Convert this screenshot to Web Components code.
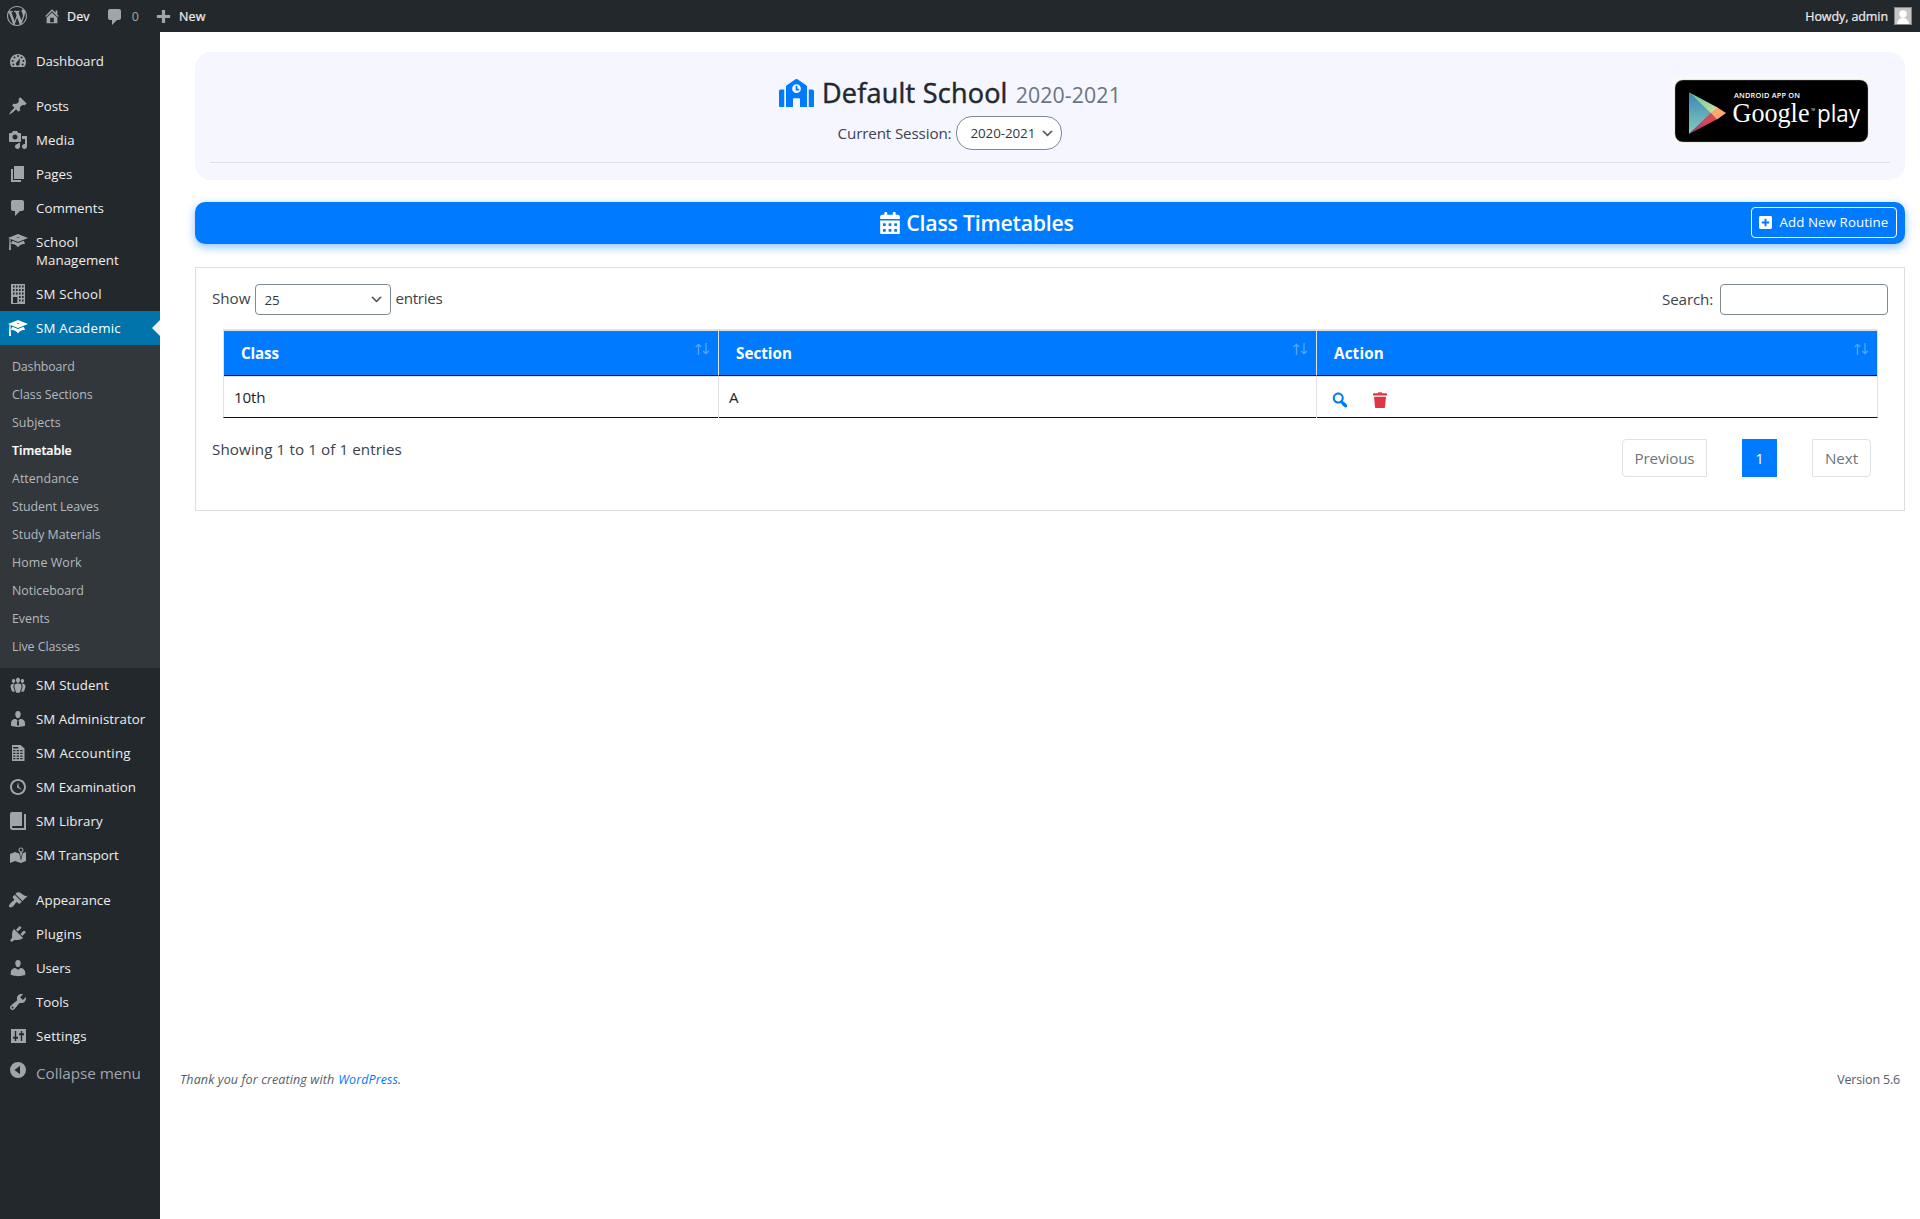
<!DOCTYPE html>
<html lang="en">
<head>
<meta charset="utf-8">
<title>Class Timetables</title>
<style>
html,body{margin:0;height:100%;background:#fff}
body{font-family:"Open Sans","Noto Sans",sans-serif;color:#3c434a;overflow:hidden}
</style>
</head>
<body>
<admin-page></admin-page>
<script>
const ICONS = {
wp:'<path d="M20 10c0-5.51-4.49-10-10-10C4.48 0 0 4.49 0 10c0 5.52 4.48 10 10 10 5.51 0 10-4.48 10-10zM7.78 15.37L4.37 6.22c.55-.02 1.17-.08 1.17-.08.5-.06.44-1.13-.06-1.11 0 0-1.45.11-2.37.11-.18 0-.37 0-.58-.01C4.12 2.69 6.87 1.11 10 1.11c2.33 0 4.45.87 6.05 2.34-.68-.11-1.65.39-1.65 1.58 0 .74.45 1.36.9 2.1.35.61.55 1.36.55 2.46 0 1.49-1.4 5-1.4 5l-3.03-8.37c.54-.02.82-.17.82-.17.5-.05.44-1.25-.06-1.22 0 0-1.44.12-2.38.12-.87 0-2.33-.12-2.33-.12-.5-.03-.56 1.2-.06 1.22l.92.08 1.26 3.41zM17.41 10c.24-.64.74-1.87.43-4.25.7 1.29 1.05 2.71 1.05 4.25 0 3.29-1.73 6.24-4.4 7.78.97-2.59 1.94-5.2 2.92-7.78zM6.1 18.09C3.12 16.65 1.11 13.53 1.11 10c0-1.3.23-2.48.72-3.59C3.25 10.3 4.67 14.2 6.1 18.09zm4.03-6.63l2.58 6.98c-.86.29-1.76.45-2.71.45-.79 0-1.57-.11-2.29-.33.81-2.38 1.62-4.74 2.42-7.1z"/>',
home:'<path fill-rule="evenodd" d="M16 8.5l1.53 1.53-1.06 1.06L10 4.6l-6.47 6.47-1.06-1.06L10 2.47l4 4V4h2v4.5zm-6-2.46l6 5.99V18H4v-5.97zM12 17v-5H8v5h4z"/>',
comment:'<path d="M5 2h9c1.1 0 2 .9 2 2v7c0 1.1-.9 2-2 2h-2l-5 5v-5H5c-1.1 0-2-.9-2-2V4c0-1.1.9-2 2-2z"/>',
plus:'<path d="M17 8.5v3h-5.300v5.300H8.300V11.500H3v-3h5.300V3.200h3.400V8.500z"/>',
dashboard:'<path fill-rule="evenodd" d="M3.760 16h12.480c1.100-1.370 1.760-3.110 1.760-5 0-4.420-3.580-8-8-8s-8 3.580-8 8c0 1.890.66 3.630 1.760 5zM9 5a1 1 0 0 1 2 0 1 1 0 0 1-2 0zM5.500 6.500a1 1 0 0 1 2 0 1 1 0 0 1-2 0zM12.500 6.500a1 1 0 0 1 2 0 1 1 0 0 1-2 0zM3.600 10a1 1 0 0 1 2 0 1 1 0 0 1-2 0zM14.400 10a1 1 0 0 1 2 0 1 1 0 0 1-2 0zM4.300 13.500a1 1 0 0 1 2 0 1 1 0 0 1-2 0zM13.700 13.500a1 1 0 0 1 2 0 1 1 0 0 1-2 0zM8.700 11.200L12 7.200 11.600 12.300a1.900 1.900 0 1 1-2.900-1.100z"/>',
post:'<path d="M10.440 3.020l1.820-1.820 6.360 6.350-1.830 1.820c-1.050-.68-2.480-.57-3.410.36l-.75.75c-.92.93-1.040 2.350-.35 3.410l-1.830 1.820-2.410-2.410-2.800 2.790c-.42.42-3.380 2.710-3.800 2.290s1.860-3.390 2.280-3.810l2.790-2.790L4.100 9.360l1.830-1.820c1.050.69 2.480.57 3.400-.36l.75-.75c.93-.92 1.050-2.350.36-3.410z"/>',
media:'<path fill-rule="evenodd" d="M13 11V4c0-.55-.45-1-1-1h-1.670L9 1H5L3.670 3H2c-.55 0-1 .45-1 1v7c0 .55.45 1 1 1h10c.55 0 1-.45 1-1zM7 4.500c1.380 0 2.500 1.120 2.500 2.500S8.380 9.500 7 9.500 4.500 8.380 4.500 7 5.620 4.500 7 4.500zM14 6h5v10.500c0 1.380-1.120 2.500-2.500 2.500S14 17.880 14 16.500s1.120-2.500 2.500-2.500c.17 0 .34.02.5.05V9h-3V6zm-4 8.050V13h2v3.500c0 1.380-1.120 2.500-2.500 2.500S7 17.880 7 16.500 8.120 14 9.500 14c.17 0 .34.02.5.05z"/>',
page:'<path d="M6 15V2h10v13H6zm-1 1h8v2H3V5h2v11z"/>',
learn:'<path fill-rule="evenodd" d="M10 10L2.540 7.020 3 18H1l.48-11.410L0 6l10-4 10 4zm0-5c-.55 0-1 .22-1 .5s.45.5 1 .5 1-.22 1-.5-.45-.5-1-.5zm0 6l5.570-2.230c.71.94 1.200 2.070 1.360 3.300-.3-.04-.61-.07-.93-.07-2.550 0-4.780 1.370-6 3.410C8.780 13.370 6.550 12 4 12c-.32 0-.63.03-.93.07.16-1.230.65-2.360 1.360-3.300z"/>',
building:'<path fill-rule="evenodd" d="M3 0h14v20H3zM5 1.500v2h1.600v-2zM8 1.500v2h1.600v-2zM11 1.500v2h1.600v-2zM14 1.500v2h1.600v-2zM5 5v2h1.600V5zM8 5v2h1.600V5zM11 5v2h1.600V5zM14 5v2h1.600V5zM5 8.500v2h1.600v-2zM8 8.500v2h1.600v-2zM11 8.500v2h1.600v-2zM14 8.500v2h1.600v-2zM11 12v2h1.600v-2zM14 12v2h1.600v-2zM11 15.500v2h1.600v-2zM14 15.500v2h1.600v-2zM5 13v6h4.300v-6z"/>',
groups:'<path d="M8.030 4.460c-.29 1.280.55 3.460 1.970 3.460 1.410 0 2.250-2.180 1.960-3.460-.22-.98-1.080-1.630-1.960-1.630-.89 0-1.740.65-1.970 1.630zm-4.130.9c-.25 1.080.47 2.930 1.670 2.930s1.920-1.850 1.670-2.930c-.19-.83-.92-1.390-1.670-1.390s-1.480.56-1.670 1.390zm8.860 0c-.25 1.080.47 2.930 1.660 2.930 1.200 0 1.920-1.850 1.670-2.930-.19-.83-.92-1.390-1.670-1.390-.74 0-1.470.56-1.660 1.390zm-.59 11.430l1.250-4.300C14.200 10 12.710 8.470 10 8.470c-2.720 0-4.210 1.530-3.440 4.020l1.260 4.300C8.050 17.510 9 18 10 18c.98 0 1.940-.49 2.170-1.210zm-6.100-7.630c-.49.67-.96 1.830-.42 3.590l1.120 3.790c-.34.2-.77.31-1.200.31-.85 0-1.650-.41-1.850-1.030l-1.070-3.650c-.65-2.110.61-3.400 2.920-3.400.27 0 .54.02.79.06-.1.1-.2.22-.29.33zm8.350-.39c2.310 0 3.580 1.290 2.920 3.400l-1.070 3.650c-.2.62-1 1.030-1.850 1.030-.43 0-.86-.11-1.200-.31l1.110-3.770c.55-1.780.08-2.940-.42-3.610-.08-.11-.18-.23-.28-.33.25-.04.51-.06.79-.06z"/>',
businessman:'<path d="M10 9.250c-2.270 0-2.730-3.440-2.730-3.440C7 4.020 7.820 2 9.970 2c2.160 0 2.980 2.020 2.710 3.810 0 0-.41 3.440-2.680 3.440z"/><path d="M16.500 12.240c.41.7.5 1.410.5 2.140v2.490c-2 .8-4.500 1.130-7 1.130s-5-.4-7-1.130v-2.490c0-.75.07-1.460.46-2.150s.81-1.250 1.500-1.680C5.660 10.120 7.190 10 8 10l1.670 1.670L9 13v3l1.020 1.080L11 16v-3l-.68-1.330L11.970 10c.77 0 2.200.07 2.900.52.71.45 1.210 1.020 1.630 1.720z"/>',
sheet:'<path fill-rule="evenodd" d="M4 2h8.500L16.500 5.500V18H4zM5.200 4v1.600h5V4zM5.200 7v1.300h2.200V7zM8.600 7v1.300h2.400V7zM12.200 7v1.300h2.400V7zM5.200 9.700V11h2.200V9.700zM8.600 9.700V11h2.400V9.700zM12.200 9.700V11h2.400V9.700zM5.200 12.400v1.300h2.200v-1.300zM8.600 12.400v1.300h2.400v-1.300zM12.200 12.400v1.300h2.400v-1.300zM5.200 15v1.300h2.200V15zM8.600 15v1.300h2.400V15zM12.200 15v1.300h2.400V15z"/>',
clock:'<path fill-rule="evenodd" d="M10 2c4.420 0 8 3.580 8 8s-3.580 8-8 8-8-3.580-8-8 3.580-8 8-8zm0 14c3.310 0 6-2.690 6-6s-2.690-6-6-6-6 2.690-6 6 2.690 6 6 6z"/><path d="M9.290 10.710c.07.05.14.1.23.15L14 13l-3.030-3.190L10 5l-.97 4.810c-.1.3 0 .7.26.9z"/>',
book:'<path d="M16 3h2v16H4.500C3 19 2 17.800 2 16.500V3c0-1.200.8-2 2-2h10v14H4.800c-1 0-1 2 0 2H16z"/>',
location:'<path fill-rule="evenodd" d="M13 13.140l1.170-5.940c.79-.43 1.330-1.250 1.330-2.200 0-1.380-1.120-2.500-2.500-2.500S10.500 3.620 10.500 5c0 .95.54 1.770 1.330 2.200zm0-9.640c.83 0 1.500.67 1.500 1.500s-.67 1.500-1.500 1.500-1.500-.67-1.500-1.500.67-1.500 1.500-1.500zm1.720 4.800L18 6.970v9L13.120 18 7 15.970l-5 2v-9l5-2 4.270 1.410 1.730 7.300z"/>',
appearance:'<path d="M14.480 11.060L7.410 3.990l1.500-1.500c.5-.56 2.300-.47 3.510.32 1.210.8 1.430 1.280 2.910 2.100 1.180.64 2.450 1.260 4.450.85zm-.71.71L6.700 4.700 4.930 6.470c-.39.39-.39 1.020 0 1.410l1.060 1.060c.39.39.39 1.030 0 1.420-.6.6-1.430 1.110-2.210 1.690-.35.26-.7.53-1.010.84C1.430 14.230.4 16.080 1.400 17.070c.99 1 2.840-.03 4.180-1.360.31-.31.58-.66.85-1.020.57-.78 1.080-1.610 1.690-2.210.39-.39 1.020-.39 1.410 0l1.060 1.060c.39.39 1.020.39 1.410 0z"/>',
plugins:'<path d="M13.110 4.360L9.870 7.600 8 5.730l3.240-3.240c.35-.34 1.050-.2 1.560.32.52.51.66 1.210.31 1.550zm-8 1.770l.91-1.120 9.010 9.010-1.190.84c-.71.71-2.630 1.160-3.820 1.160H6.140L4.900 17.260c-.59.59-1.540.59-2.120 0-.59-.58-.59-1.530 0-2.120l1.240-1.240v-3.880c0-1.130.4-3.190 1.090-3.890zm7.260 3.970l3.240-3.240c.34-.35 1.040-.21 1.550.31.52.51.66 1.210.31 1.550l-3.240 3.250z"/>',
users:'<path d="M10 9.250c-2.270 0-2.730-3.440-2.730-3.440C7 4.020 7.820 2 9.970 2c2.160 0 2.980 2.020 2.710 3.810 0 0-.41 3.440-2.680 3.440zm0 2.570L12.720 10c2.390 0 4.520 2.330 4.520 4.530v2.490s-3.650 1.130-7.240 1.130c-3.650 0-7.240-1.130-7.240-1.130v-2.490c0-2.250 1.940-4.480 4.470-4.480z"/>',
tools:'<path fill-rule="evenodd" d="M16.680 9.770c-1.340 1.340-3.300 1.670-4.950.99l-5.410 6.520c-.99.99-2.590.99-3.580 0s-.99-2.590 0-3.570l6.520-5.420c-.68-1.650-.35-3.610.99-4.950 1.280-1.280 3.120-1.620 4.720-1.060l-2.890 2.890 2.820 2.820 2.860-2.870c.53 1.580.18 3.390-1.080 4.650zM3.810 16.210c.4.39 1.040.39 1.430 0 .4-.4.4-1.040 0-1.430-.39-.4-1.030-.4-1.430 0-.39.39-.39 1.030 0 1.430z"/>',
settings:'<path fill-rule="evenodd" d="M3 3h15v14H3zM6.800 5v5.700H5v2h1.800v2.300h1.400v-2.300H10v-2H8.200V5zM12.800 5v2.200H11v2h1.800V15h1.400V9.200H16v-2h-1.800V5z"/>',
collapse:'<path fill-rule="evenodd" d="M10 2a8 8 0 1 1 0 16 8 8 0 0 1 0-16zM12 5.800L6.500 10l5.500 4.200z"/>',
search:'<path fill-rule="evenodd" d="M12.140 4.180c1.870 1.870 2.110 4.750.72 6.890.12.1.22.21.36.31.2.16.47.36.81.59.34.24.56.39.66.47.42.31.73.57.94.78.32.32.6.65.84 1 .25.35.44.69.59 1.040.14.35.21.68.18 1-.02.32-.14.59-.36.81s-.49.34-.81.36c-.31.02-.65-.04-.99-.19-.35-.14-.7-.34-1.040-.59-.35-.24-.68-.52-1-.84-.21-.21-.47-.52-.77-.93-.1-.13-.25-.35-.47-.66-.22-.32-.4-.57-.56-.78-.16-.2-.29-.35-.44-.5-2.070 1.090-4.690.76-6.440-.98-2.140-2.150-2.140-5.640 0-7.780 2.150-2.150 5.630-2.150 7.780 0zm-1.410 6.360c1.360-1.370 1.360-3.580 0-4.950-1.370-1.370-3.590-1.370-4.950 0-1.370 1.370-1.370 3.580 0 4.950 1.360 1.370 3.580 1.370 4.950 0z"/>',
trash:'<path fill-rule="evenodd" d="M8 3.200C8 2.400 9 2 10 2s2 .4 2 1.200h4c.6 0 1 .4 1 .9V5.500H3V4.100c0-.5.4-.9 1-.9zm1 0h2c0-.5-2-.5-2 0zM4 6.700h12l-1 10.300c0 .6-.5 1-1 1H6c-.5 0-1-.4-1-1z"/>',
chevron:'<path d="M5 6l5 5 5-5 2 1-7 7-7-7 2-1z"/>',
plussq:'<path fill-rule="evenodd" d="M2.200 0h15.600Q20 0 20 2.200v15.600q0 2.200-2.200 2.200H2.200Q0 20 0 17.800V2.200Q0 0 2.200 0zM8.500 4.300v4.200H4.300v3h4.200v4.200h3v-4.200h4.200v-3h-4.200V4.300z"/>'
};
ICONS.school='<path fill-rule="evenodd" d="M0 224v272c0 8.840 7.160 16 16 16h80V192H32c-17.670 0-32 14.330-32 32zm360-48h-24v-40c0-4.420-3.580-8-8-8h-16c-4.420 0-8 3.580-8 8v64c0 4.420 3.580 8 8 8h48c4.420 0 8-3.580 8-8v-16c0-4.420-3.580-8-8-8zm137.750-63.960l-160-106.670a32.020 32.020 0 0 0-35.500 0l-160 106.670A32.002 32.002 0 0 0 128 138.660V512h128V368c0-8.840 7.160-16 16-16h96c8.840 0 16 7.160 16 16v144h128V138.670c0-10.700-5.350-20.700-14.250-26.630zM320 256c-44.180 0-80-35.820-80-80s35.820-80 80-80 80 35.820 80 80-35.820 80-80 80zm288-64h-64v320h80c8.840 0 16-7.160 16-16V224c0-17.670-14.330-32-32-32z"/>';
ICONS.calendar=`<path fill-rule="evenodd" d="M400 64h-48V16c0-8.800-7.200-16-16-16h-32c-8.800 0-16 7.200-16 16v48H160V16c0-8.800-7.200-16-16-16h-32c-8.800 0-16 7.200-16 16v48H48C21.500 64 0 85.500 0 112v48h448v-48c0-26.500-21.500-48-48-48zM0 192v272c0 26.500 21.500 48 48 48h352c26.500 0 48-21.500 48-48V192z${[64,192,320].map(x=>[256,384].map(y=>`M${x+12} ${y}h40q12 0 12 12v40q0 12-12 12h-40q-12 0-12-12v-40q0-12 12-12z`).join('')).join('')}"/>`;
const BOX = {school:'0 0 640 512', calendar:'0 0 448 512'};

class UiIcon extends HTMLElement{
  connectedCallback(){
    const n=this.getAttribute('name'), w=this.getAttribute('w')||20, h=this.getAttribute('h')||w;
    const r=this.attachShadow({mode:'open'});
    r.innerHTML=`<style>:host{display:inline-flex;flex:none}svg{display:block;fill:currentColor}</style><svg width="${w}" height="${h}" viewBox="${BOX[n]||'0 0 20 20'}">${ICONS[n]}</svg>`;
  }
}
/* A label whose tracking is adjusted so that its text spans the width given in "w". */
class FitText extends HTMLElement{
  connectedCallback(){
    const r=this.attachShadow({mode:'open'});
    r.innerHTML='<style>:host{display:inline-block;white-space:nowrap;flex:none}</style><slot></slot>';
    const w=parseFloat(this.getAttribute('w')), n=this.textContent.length;
    if(w&&n>1){
      const nat=this.getBoundingClientRect().width;
      const fs=parseFloat(getComputedStyle(this).fontSize);
      this.style.letterSpacing=((w+fs*.06-nat)/n).toFixed(3)+'px';
    }
  }
}
class AdminBar extends HTMLElement{
  connectedCallback(){
    this.attachShadow({mode:'open'}).innerHTML=`<style>
:host{display:flex;justify-content:space-between;align-items:center;height:32px;background:#23282d;color:#eee;font-size:12.500px;line-height:31px;padding:0 8px 0 7px;box-sizing:border-box}
div{display:flex;align-items:center}
ui-icon{color:#a0a5aa}
.a{margin-left:16px}.b{margin-left:6px}
.n{color:#a0a5aa;margin-left:7px;padding-top:1px}
.av{width:16px;height:16px;border:1px solid #82878c;background:#c6c6c6;margin-left:6px}
svg{display:block}
fit-text{-webkit-text-stroke:.2px currentColor;padding-top:1px}
</style>
<div><ui-icon name="wp" w="20"></ui-icon><ui-icon class="a" name="home" w="18"></ui-icon><fit-text class="b" w="22">Dev</fit-text>
<ui-icon name="comment" w="20" style="margin:2px 0 0 15px"></ui-icon><span class="n">0</span><ui-icon name="plus" w="19" style="margin-left:15px"></ui-icon><fit-text style="margin-left:6px" w="26">New</fit-text></div>
<div><fit-text w="82">Howdy, admin</fit-text><span class="av"><svg width="16" height="16" viewBox="0 0 16 16" fill="#fff"><circle cx="8" cy="6" r="3.700"/><path d="M2 16c.3-3.500 2.300-5.300 4.500-6h3c2.200.7 4.200 2.500 4.500 6z"/></svg></span></div>`;
  }
}
class MenuItem extends HTMLElement{
  connectedCallback(){
    const on=this.hasAttribute('current');
    this.attachShadow({mode:'open'}).innerHTML=`<style>
:host{display:flex;position:relative;min-height:34px;box-sizing:border-box;padding:8px 0 8px 8px;gap:8px;font-size:13.300px;line-height:18px;color:#eee;${on?'background:#0073aa;color:#fff;':''}}
ui-icon{color:${on?'#fff':'#a0a5aa'};height:18px;align-items:center}
.t{display:flex;flex-direction:column;align-items:flex-start}
i{display:${on?'block':'none'};position:absolute;right:0;top:9px;border:8px solid transparent;border-left:0;border-right-color:#f1f1f1}
</style><ui-icon name="${this.getAttribute('icon')}" w="20"></ui-icon><div class="t"><slot></slot></div><i></i>`;
  }
}
class SubMenu extends HTMLElement{
  connectedCallback(){
    this.attachShadow({mode:'open'}).innerHTML=`<style>
:host{display:flex;flex-direction:column;align-items:flex-start;background:#32373c;padding:8px 0 7px 12px;font-size:12.400px;line-height:28px;color:#b4b9be}
</style><slot></slot>`;
  }
}
class SideMenu extends HTMLElement{
  connectedCallback(){
    const it=([i,...l])=>`<menu-item icon="${i}">${l.map(([t,w])=>`<fit-text w="${w}">${t}</fit-text>`).join('')}</menu-item>`;
    const A=[['post',['Posts',32]],['media',['Media',38]],['page',['Pages',35.5]],['comment',['Comments',67]],['learn',['School',41.5],['Management',82]],['building',['SM School',65]]];
    const B=[['groups',['SM Student',72]],['businessman',['SM Administrator',108.5]],['sheet',['SM Accounting',94]],['clock',['SM Examination',99]],['book',['SM Library',66]],['location',['SM Transport',82]]];
    const C=[['appearance',['Appearance',74]],['plugins',['Plugins',45]],['users',['Users',34]],['tools',['Tools',32]],['settings',['Settings',50]]];
    const S=[['Dashboard',62],['Class Sections',80],['Subjects',48],['Timetable',59],['Attendance',66],['Student Leaves',86],['Study Materials',88],['Home Work',69],['Noticeboard',71],['Events',37],['Live Classes',67]];
    this.attachShadow({mode:'open'}).innerHTML=`<style>
:host{display:flex;flex-direction:column;width:160px;flex:none;background:#23282d;padding-top:12px;box-sizing:border-box}
.sep{height:11px;flex:none}
.on{color:#fff;font-weight:600;-webkit-text-stroke:.2px #fff}
.c{display:flex;gap:8px;padding:7px 0 0 8px;color:#a0a5aa;font-size:15.300px;line-height:26px}
</style>${it(['dashboard',['Dashboard',67]])}<div class="sep"></div>${A.map(it).join('')}
<menu-item icon="learn" current><fit-text w="84">SM Academic</fit-text></menu-item>
<sub-menu>${S.map(([t,w])=>`<fit-text ${t=='Timetable'?'class="on"':''} w="${w}">${t}</fit-text>`).join('')}</sub-menu>
${B.map(it).join('')}<div class="sep"></div>${C.map(it).join('')}
<div class="c"><ui-icon name="collapse" w="20"></ui-icon><fit-text w="104">Collapse menu</fit-text></div>`;
  }
}
class PlayBadge extends HTMLElement{
  connectedCallback(){
    this.attachShadow({mode:'open'}).innerHTML=`<style>
:host{display:block;width:198px;height:71px;background:#f8f8f8}svg{display:block}
.sans{font-family:"Open Sans",sans-serif}.serif{font-family:"Liberation Serif",serif}
</style><svg width="198" height="71" viewBox="0 0 198 71">
<defs><linearGradient id="b" x1="0" y1="0" x2="0" y2="1"><stop offset="0" stop-color="#3b83b4"/><stop offset="1" stop-color="#84cfbd"/></linearGradient>
<linearGradient id="g" x1="0" y1="0" x2="1" y2="1"><stop offset="0" stop-color="#5fc0a0"/><stop offset="1" stop-color="#cfe6a0"/></linearGradient>
<linearGradient id="r" x1="0" y1="1" x2="1" y2="0"><stop offset="0" stop-color="#8d3a8c"/><stop offset=".6" stop-color="#d5485a"/><stop offset="1" stop-color="#d5485a"/></linearGradient></defs>
<rect x="4" y="5" width="193" height="62" rx="8" fill="#000" stroke="#a6a6a6" stroke-width=".4"/>
<path d="M18 17.200V59L41.500 38z" fill="url(#b)"/><path d="M18 17.200L46.500 32.500 40.500 38.700z" fill="url(#g)"/><path d="M18 59L40 37.500 46 44.200z" fill="url(#r)"/><path d="M46 32.300L55 38 46 44.500 40.300 38.500z" fill="#fcaa6c"/>
<g fill="#fff"><text x="63" y="22.600" class="sans" font-weight="600" font-size="7.400" textLength="66">ANDROID APP ON</text>
<text x="61.500" y="47" class="serif" font-size="28" textLength="77" lengthAdjust="spacingAndGlyphs">Google</text>
<text x="140" y="36" class="sans" font-size="3" textLength="4" lengthAdjust="spacingAndGlyphs">TM</text>
<text x="146" y="47" class="sans" font-size="24" textLength="43" lengthAdjust="spacingAndGlyphs">play</text></g></svg>`;
  }
}
class SchoolHeader extends HTMLElement{
  connectedCallback(){
    this.attachShadow({mode:'open'}).innerHTML=`<style>
:host{display:grid;grid-template-columns:1fr 198px;background:#f5f6ff;border-radius:16px;height:128px;box-sizing:border-box;padding:0 15px;grid-template-rows:110px 1px}
.m{display:flex;flex-direction:column;align-items:center;padding-top:22px}
.t{display:flex;align-items:baseline;height:38px;line-height:38px;color:#23282d;padding-right:2px}
.t fit-text.h{font-size:27px;margin:0 8px 0 8px;-webkit-text-stroke:.5px #23282d}
.t fit-text.y{font-size:21.300px;color:#6c757d}
.t ui-icon{color:#007bff;align-self:center}
.s{display:flex;align-items:center;gap:5px;font-size:15.200px;margin-top:4px;padding-right:2px}
.sel{display:flex;align-items:center;justify-content:space-between;width:106px;height:34px;box-sizing:border-box;border:1px solid #7e8993;border-radius:16px;background:#fff;color:#32373c;padding:0 6px 0 13px;font-size:13.400px}
.sel ui-icon{color:#555}
play-badge{margin:23px 0 0 -21px}
hr{grid-column:1/3;margin:0;border:0;background:#dfdfeb;height:1px;width:100%}
</style>
<div class="m"><div class="t"><ui-icon name="school" w="35" h="28"></ui-icon><fit-text class="h" w="184">Default School</fit-text><fit-text class="y" w="104">2020-2021</fit-text></div>
<div class="s"><fit-text w="113">Current Session:</fit-text><span class="sel"><fit-text w="64">2020-2021</fit-text><ui-icon name="chevron" w="15"></ui-icon></span></div></div>
<play-badge></play-badge><hr>`;
  }
}
class TitleBar extends HTMLElement{
  connectedCallback(){
    this.attachShadow({mode:'open'}).innerHTML=`<style>
:host{display:flex;align-items:center;height:42px;box-sizing:border-box;padding:0 8px;border-radius:10px;background:#007bff;color:#fff;box-shadow:0 3px 10px rgba(0,123,255,.45)}
.t{flex:1;display:flex;align-items:center;justify-content:center;gap:6px;font-size:21.300px;font-weight:600;line-height:34px}
.b{display:flex;align-items:center;width:146px;height:31px;box-sizing:border-box;border:1px solid #fff;border-radius:4px;padding-left:7px;gap:7.500px;font-size:13.300px;line-height:18px;margin-top:-2px}
.b fit-text{margin-top:-1px}
</style><div class="t"><ui-icon name="calendar" w="20" h="22.500"></ui-icon><fit-text w="166">Class Timetables</fit-text></div>
<div class="b"><ui-icon name="plussq" w="13"></ui-icon><fit-text w="108">Add New Routine</fit-text></div>`;
  }
}
class RoutineTable extends HTMLElement{
  connectedCallback(){
    const sort='<svg width="15" height="12" viewBox="0 0 15 12" fill="none" stroke="#55a5ff" stroke-width="1.300"><path d="M3.500 12V1.500M.7 4L3.500 1.300 6.300 4M11 0v10.500M8.200 8L11 10.700 13.800 8"/></svg>';
    this.attachShadow({mode:'open'}).innerHTML=`<style>
:host{display:block;margin:14px 10px 0 11px;color:#212529}
.g{display:grid;grid-template-columns:494px 598px 1fr;box-sizing:border-box}
.g>div{box-sizing:border-box}
.h{border:1px solid #dee2e6;border-top-width:2px;height:48px}
.h>div{display:flex;justify-content:space-between;background:#007bff;color:#fff;font-weight:700;font-size:15.200px;line-height:44px;border-bottom:1px solid #111;padding:0 8px 0 17px;height:45px}
.h>div+div,.r>div+div{border-left:1px solid #dee2e6}
.h svg{margin-top:12px}
.r{border:1px solid #dee2e6;border-top:0;border-bottom:1px solid #111;height:41px;font-size:15.200px;line-height:40px}
.r>div{padding:0 0 1px 10px;display:flex;align-items:center}
</style><div class="g h"><div><fit-text w="37">Class</fit-text>${sort}</div><div><fit-text w="55">Section</fit-text>${sort}</div><div><fit-text w="49">Action</fit-text>${sort}</div></div>
<div class="g r"><div><fit-text w="30.500">10th</fit-text></div><div>A</div><div style="padding:4px 0 0 13px;gap:20px"><ui-icon name="search" w="20" style="color:#007bff"></ui-icon><ui-icon name="trash" w="20" style="color:#dc3545"></ui-icon></div></div>`;
  }
}
class DataPanel extends HTMLElement{
  connectedCallback(){
    this.attachShadow({mode:'open'}).innerHTML=`<style>
:host{display:block;box-sizing:border-box;height:244px;border:1px solid #dcdfe2;padding:16px;font-size:15.200px;color:#3c434a}
.row{display:flex;justify-content:space-between}
.row>div{display:flex;align-items:center}
.f{box-sizing:border-box;height:31px;border:1px solid #7e8993;border-radius:4px;background:#fff}
.sel{display:flex;align-items:center;justify-content:space-between;width:136px;padding:0 6px 0 8px;margin:0 4px 0 5px;font-size:13.400px;color:#32373c}
.sel ui-icon{color:#555}
.in{width:168px;margin-left:7px}
.pg{display:flex;padding-right:17px;gap:35px}
.pg span{box-sizing:border-box;height:38px;border:1px solid #dee2e6;color:#6c757d;display:flex;align-items:center;justify-content:center}
</style>
<div class="row"><div><fit-text w="37.500" style="margin-top:-4px">Show</fit-text><span class="f sel"><fit-text w="14.500">25</fit-text><ui-icon name="chevron" w="15"></ui-icon></span><fit-text w="46" style="margin-top:-4px">entries</fit-text></div>
<div><fit-text w="50" style="margin-top:-2px">Search:</fit-text><span class="f in"></span></div></div>
<routine-table></routine-table>
<div class="row" style="margin-top:21px"><fit-text w="189" style="line-height:20px">Showing 1 to 1 of 1 entries</fit-text>
<div class="pg"><span style="width:85px;border-radius:4px 0 0 4px"><fit-text w="59">Previous</fit-text></span><span style="width:35px;background:#007bff;border-color:#007bff;color:#fff">1</span><span style="width:59px;border-radius:0 4px 4px 0"><fit-text w="32">Next</fit-text></span></div></div>`;
  }
}
class PageFooter extends HTMLElement{
  connectedCallback(){
    this.attachShadow({mode:'open'}).innerHTML=`<style>
:host{display:flex;justify-content:space-between;font-size:12.500px;line-height:20px;color:#555d66}
a{color:#007bff}.l{font-style:italic;display:flex}
</style><div class="l"><fit-text w="153.500">Thank you for creating with</fit-text><a style="margin-left:4px"><fit-text w="59">WordPress</fit-text></a>.</div><fit-text w="62">Version 5.6</fit-text>`;
  }
}
class AdminPage extends HTMLElement{
  connectedCallback(){
    this.attachShadow({mode:'open'}).innerHTML=`<style>
:host{display:flex;flex-direction:column;height:1219px}
.b{display:flex;flex:1}
main{flex:1;display:flex;flex-direction:column;padding:20px 15px 129px 35px}
title-bar{margin:22px 0 23px}
page-footer{margin:auto 5px 0 -15px}
</style><admin-bar></admin-bar><div class="b"><side-menu></side-menu><main><school-header></school-header><title-bar></title-bar><data-panel></data-panel><page-footer></page-footer></main></div>`;
  }
}
const defs={'ui-icon':UiIcon,'fit-text':FitText,'admin-bar':AdminBar,'menu-item':MenuItem,'sub-menu':SubMenu,'side-menu':SideMenu,'play-badge':PlayBadge,'school-header':SchoolHeader,'title-bar':TitleBar,'routine-table':RoutineTable,'data-panel':DataPanel,'page-footer':PageFooter,'admin-page':AdminPage};
for(const k in defs) customElements.define(k,defs[k]);
</script>
</body>
</html>
